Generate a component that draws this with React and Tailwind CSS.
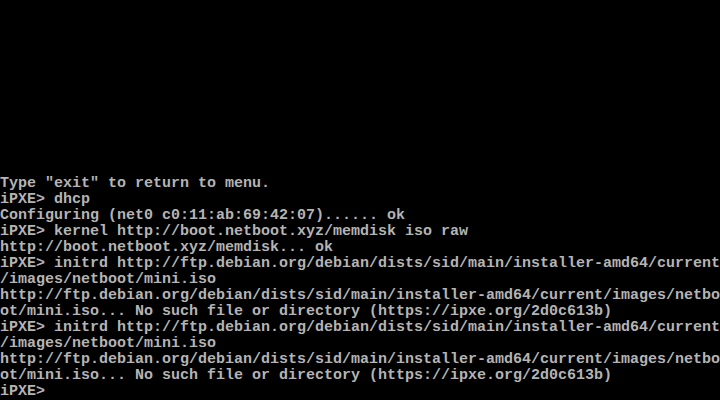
const lines = [
  'Type "exit" to return to menu.',
  'iPXE> dhcp',
  'Configuring (net0 c0:11:ab:69:42:07)...... ok',
  'iPXE> kernel http://boot.netboot.xyz/memdisk iso raw',
  'http://boot.netboot.xyz/memdisk... ok',
  'iPXE> initrd http://ftp.debian.org/debian/dists/sid/main/installer-amd64/current',
  '/images/netboot/mini.iso',
  'http://ftp.debian.org/debian/dists/sid/main/installer-amd64/current/images/netbo',
  'ot/mini.iso... No such file or directory (https://ipxe.org/2d0c613b)',
  'iPXE> initrd http://ftp.debian.org/debian/dists/sid/main/installer-amd64/current',
  '/images/netboot/mini.iso',
  'http://ftp.debian.org/debian/dists/sid/main/installer-amd64/current/images/netbo',
  'ot/mini.iso... No such file or directory (https://ipxe.org/2d0c613b)',
  'iPXE>',
];

const App = () => {
  return (
    <div className="w-[720px] h-[400px] bg-black overflow-hidden flex flex-col justify-end">
      <div className="font-['Liberation_Mono',monospace] text-[15px] leading-[16px] font-bold text-[#b4b4b4] whitespace-pre">
        {lines.map((line, i) => (
          <div key={i} className="h-4">{line}</div>
        ))}
      </div>
    </div>
  );
};

export default App;
